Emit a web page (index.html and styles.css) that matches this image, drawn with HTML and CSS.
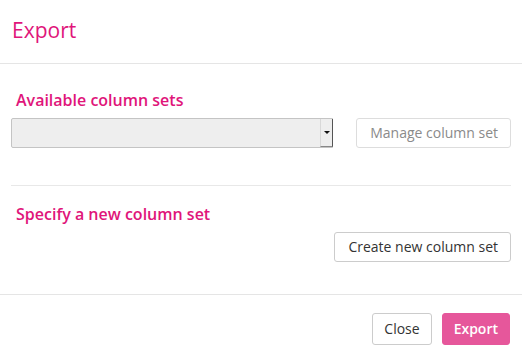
FILE: index.html
```html
<!DOCTYPE html>
<html>
<head>
    <link rel="stylesheet" href="styles.css">
</head>
<body>
<div class="modal">
    <div class="modal-header">
        <h4 class="modal-title">Export</h4>
    </div>

    <div class="modal-body">
        <div class="section">
            <h5>Available column sets</h5>
            <div class="row">
                <div class="select">
                    <span class="select-arrow"></span>
                </div>
                <button class="btn" disabled>Manage column set</button>
            </div>
        </div>

        <div class="section second">
            <h5>Specify a new column set</h5>
            <div class="row right">
                <button class="btn">Create new column set</button>
            </div>
        </div>
    </div>

    <div class="modal-footer">
        <button class="btn">Close</button>
        <button class="btn btn-primary">Export</button>
    </div>
</div>
</body>
</html>
```

FILE: styles.css
```css
body {
    margin: 0;
    background: white;
    font-family: "Open Sans", Arial, sans-serif;
    color: #333;
}

.modal {
    width: 522px;
    height: 352px;
    overflow: hidden;
}

.modal-header {
    height: 63px;
    padding: 0 12px;
    border-bottom: 1px solid #e5e5e5;
    display: flex;
    align-items: center;
}

.modal-title {
    margin: 0;
    font-size: 21px;
    font-weight: 400;
    color: #e0157a;
    position: relative;
    top: -2px;
}

.modal-body {
    padding: 0 11px 0 11px;
}

.section {
    padding: 24px 0 37px;
}

.section.second {
    border-top: 1px solid #e8e8e8;
    padding: 16px 0 32px;
}

h5 {
    margin: 0 0 6px 5px;
    font-size: 16px;
    font-weight: 600;
    color: #e0157a;
    line-height: 24px;
}

.row {
    display: flex;
    align-items: center;
    justify-content: space-between;
}

.row.right {
    justify-content: flex-end;
}

.select {
    width: 320px;
    height: 28px;
    background: #eeeeee;
    border: 1px solid #c4c4c4;
    border-radius: 2px 0 0 2px;
    display: flex;
    justify-content: flex-end;
}

.select-arrow {
    width: 13px;
    height: 28px;
    border-left: 1px solid #d8d8d8;
    border-right: 1px solid #555;
    border-bottom: 1px solid #888;
    box-sizing: border-box;
    margin: 0 -1px -1px 0;
    position: relative;
}

.select-arrow::after {
    content: "";
    position: absolute;
    left: 3px;
    top: 12px;
    border-left: 3px solid transparent;
    border-right: 3px solid transparent;
    border-top: 3px solid #111;
}

.btn {
    font-family: "Open Sans", Arial, sans-serif;
    font-size: 14px;
    line-height: 20px;
    padding: 4px 12px 4px 13px;
    background: white;
    color: #333;
    border: 1px solid #cccccc;
    border-radius: 3px;
}

.btn[disabled] {
    color: #8a8a8a;
    border-color: #dddddd;
}

.modal-footer {
    border-top: 1px solid #e5e5e5;
    padding: 18px 12px 0;
    display: flex;
    justify-content: flex-end;
    gap: 10px;
}

.modal-footer .btn {
    padding: 5px 11px;
}

.btn-primary {
    background: #e6579b;
    border-color: #e6579b;
    color: white;
    font-weight: 600;
}
```
